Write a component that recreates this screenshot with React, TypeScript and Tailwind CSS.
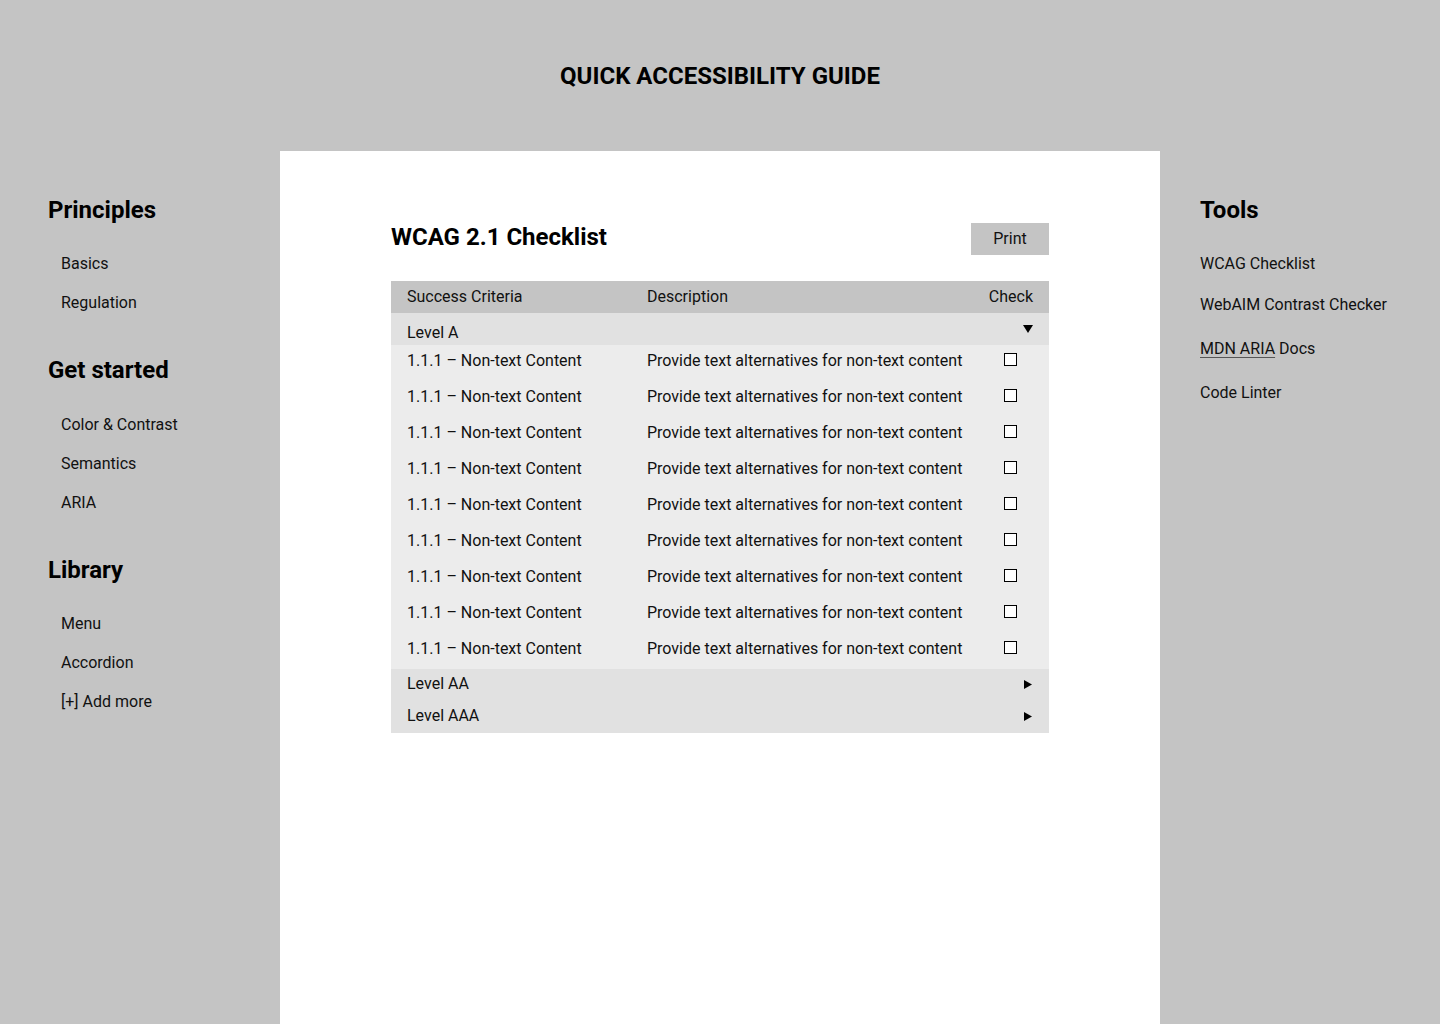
import React from 'react';

const sections = [
  { title: 'Principles', links: ['Basics', 'Regulation'], gap: 'mt-[28px]' },
  { title: 'Get started', links: ['Color & Contrast', 'Semantics', 'ARIA'], gap: 'mt-[29px]' },
  { title: 'Library', links: ['Menu', 'Accordion', '[+] Add more'], gap: 'mt-[28px]' },
];

const rows = Array.from({ length: 9 }, () => ({
  id: '1.1.1 – Non-text Content',
  desc: 'Provide text alternatives for non-text content',
}));

function TriangleDown() {
  return (
    <svg width="10" height="8" viewBox="0 0 10 8" aria-hidden>
      <polygon points="0,0 10,0 5,8" fill="#000" />
    </svg>
  );
}

function TriangleRight() {
  return (
    <svg width="8" height="9" viewBox="0 0 8 9" aria-hidden>
      <polygon points="0,0 8,4.5 0,9" fill="#000" />
    </svg>
  );
}

function LevelRow({ label, open }: { label: string; open?: boolean }) {
  return (
    <div className="flex h-8 items-center justify-between bg-[#e1e1e1] pl-4 pr-[16px]">
      <span className={open ? 'pt-[8px]' : 'pb-[2px]'}>{label}</span>
      <span className={open ? 'flex w-[10px] justify-center' : 'flex w-[10px] justify-center pb-[2px]'}>
        {open ? <TriangleDown /> : <TriangleRight />}
      </span>
    </div>
  );
}

export default function App() {
  return (
    <div
      className="min-h-[1024px] bg-[#c4c4c4] text-base text-[#111]"
      style={{ fontFamily: 'Roboto, "Liberation Sans", sans-serif' }}
    >
      <header className="flex h-[151px] items-center justify-center">
        <h1 className="text-2xl font-bold text-black">QUICK ACCESSIBILITY GUIDE</h1>
      </header>

      <div className="grid grid-cols-[280px_880px_280px]">
        {/* Left navigation */}
        <nav className="pl-12 pt-[43px]">
          {sections.map((s, i) => (
            <div key={s.title} className={i > 0 ? 'mt-[41px]' : ''}>
              <h2 className="text-2xl leading-8 font-bold text-black">{s.title}</h2>
              <ul className={`${s.gap} flex flex-col gap-[19px] pl-[13px]`}>
                {s.links.map((l) => (
                  <li key={l} className="leading-5">
                    {l}
                  </li>
                ))}
              </ul>
            </div>
          ))}
        </nav>

        {/* Main panel */}
        <main className="min-h-[873px] bg-white px-[111px] pt-[72px]">
          <div className="flex items-start justify-between">
            <h2 className="text-2xl leading-[28px] font-bold text-black">WCAG 2.1 Checklist</h2>
            <button className="h-8 w-[78px] bg-[#c4c4c4] leading-5">Print</button>
          </div>

          <div className="mt-[26px]">
            <div className="grid h-8 grid-cols-[240px_1fr_auto] items-center bg-[#c4c4c4] px-4">
              <span>Success Criteria</span>
              <span>Description</span>
              <span>Check</span>
            </div>
            <LevelRow label="Level A" open />
            <div className="bg-[#ececec]">
              {rows.map((r, i) => (
                <div
                  key={i}
                  className="grid h-9 grid-cols-[240px_1fr_45px] items-start px-4 pt-[6px] leading-5"
                >
                  <span>{r.id}</span>
                  <span>{r.desc}</span>
                  <span className="flex h-5 items-center justify-center pb-[3px]">
                    <span className="block h-[13px] w-[13px] border border-black bg-white" />
                  </span>
                </div>
              ))}
            </div>
            <LevelRow label="Level AA" />
            <LevelRow label="Level AAA" />
          </div>
        </main>

        {/* Right tools */}
        <aside className="pl-10 pt-[43px]">
          <h2 className="text-2xl leading-8 font-bold text-black">Tools</h2>
          <ul className="mt-[28px] leading-5">
            <li>WCAG Checklist</li>
            <li className="mt-[21px]">WebAIM Contrast Checker</li>
            <li className="mt-[24px]">
              <span className="underline decoration-[#555] underline-offset-[3px]">MDN ARIA</span> Docs
            </li>
            <li className="mt-[24px]">Code Linter</li>
          </ul>
        </aside>
      </div>
    </div>
  );
}
